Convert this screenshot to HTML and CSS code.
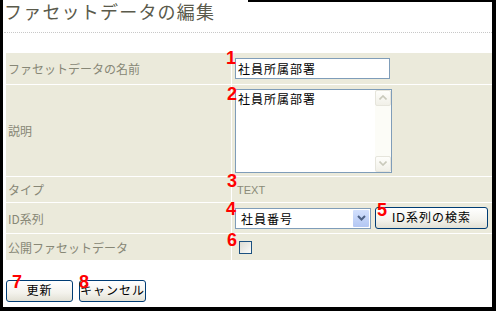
FILE: index.html
```html
<!DOCTYPE html>
<html lang="ja">
<head>
<meta charset="utf-8">
<title>ファセットデータの編集</title>
<link rel="stylesheet" href="styles.css">
</head>
<body>
<div class="frame">
  <h1 class="title">ファセットデータの編集</h1>
  <div class="form-grid">
    <div class="label">ファセットデータの名前</div>
    <div class="value"><input class="text-input" type="text" value="社員所属部署"></div>

    <div class="label">説明</div>
    <div class="value">
      <div class="textarea">
        <div class="textarea-text">社員所属部署</div>
        <div class="scrollbar">
          <span class="sb-btn"><svg width="8" height="5" viewBox="0 0 8 5"><path d="M0.5 4.5 L4 1 L7.5 4.5" fill="none" stroke="#c9c9bb" stroke-width="1.6"/></svg></span>
          <span class="sb-track"></span>
          <span class="sb-btn"><svg width="8" height="5" viewBox="0 0 8 5"><path d="M0.5 0.5 L4 4 L7.5 0.5" fill="none" stroke="#c9c9bb" stroke-width="1.6"/></svg></span>
        </div>
      </div>
    </div>

    <div class="label">タイプ</div>
    <div class="value"><span class="type-text">TEXT</span></div>

    <div class="label">ID系列</div>
    <div class="value">
      <div class="select">
        <span class="select-text">社員番号</span>
        <span class="select-btn"><svg width="9" height="6" viewBox="0 0 9 6"><path d="M1 1 L4.5 4.5 L8 1" fill="none" stroke="#4d6185" stroke-width="2"/></svg></span>
      </div>
      <button class="btn btn-search" type="button">ID系列の検索</button>
    </div>

    <div class="label">公開ファセットデータ</div>
    <div class="value"><span class="checkbox"></span></div>
  </div>
  <div class="actions">
    <button class="btn btn-action" type="button">更新</button>
    <button class="btn btn-action" type="button">キャンセル</button>
  </div>

  <span class="num n1">1</span>
  <span class="num n2">2</span>
  <span class="num n3">3</span>
  <span class="num n4">4</span>
  <span class="num n5">5</span>
  <span class="num n6">6</span>
  <span class="num n7">7</span>
  <span class="num n8">8</span>
</div>
</body>
</html>
```
FILE: styles.css
```css
html, body {
  margin: 0;
  padding: 0;
  background: #fff;
}

body {
  font-family: "Noto Sans CJK JP", sans-serif;
}

.frame {
  position: relative;
  width: 496px;
  height: 311px;
  box-sizing: border-box;
  border-left: 3px solid #000;
  border-right: 4px solid #000;
  border-bottom: 4px solid #000;
  padding-left: 3px;
  overflow: hidden;
}

.frame::before {
  content: "";
  position: absolute;
  top: 0;
  left: 245px;
  right: 0;
  height: 2px;
  background: #000;
}

.title {
  margin: 0 0 0 -2px;
  height: 32px;
  font-size: 18px;
  line-height: 22px;
  font-weight: normal;
  letter-spacing: 1.2px;
  color: #5a5a4b;
  border-bottom: 1px dotted #c8c8c8;
  box-sizing: content-box;
}

.form-grid {
  margin-top: 20px;
  display: grid;
  grid-template-columns: 225px 260px;
  grid-template-rows: 31px 91px 25px 30px 26px;
  gap: 1px;
  background: #fff;
}

.label {
  background: #ebeadb;
  color: #878776;
  font-size: 12px;
  display: flex;
  align-items: center;
  padding-left: 2px;
}

.value {
  background: #ebeadb;
  display: flex;
  align-items: center;
  padding-left: 3px;
  gap: 4px;
}

.text-input {
  width: 155px;
  height: 21px;
  box-sizing: border-box;
  border: 1px solid #7f9db9;
  padding: 0 2px;
  margin: 0;
  font-family: "Noto Sans CJK JP", sans-serif;
  font-size: 12px;
  letter-spacing: 1px;
  color: #000;
  background: #fff;
  outline: none;
}

.textarea {
  width: 157px;
  height: 84px;
  box-sizing: border-box;
  border: 1px solid #7f9db9;
  background: #fff;
  display: flex;
}

.textarea-text {
  flex: 1;
  font-size: 12px;
  letter-spacing: 1px;
  line-height: 15px;
  padding: 1px 2px;
  color: #000;
}

.scrollbar {
  width: 16px;
  display: flex;
  flex-direction: column;
  background: #fcfcf7;
}

.sb-btn {
  height: 16px;
  box-sizing: border-box;
  border: 1px solid #e6e5dc;
  border-radius: 2px;
  background: linear-gradient(#fefefb, #f1f0e8);
  display: flex;
  align-items: center;
  justify-content: center;
}

.sb-track {
  flex: 1;
}

.type-text {
  font-family: "Liberation Sans", sans-serif;
  font-size: 11px;
  color: #8a8a78;
  padding-left: 2px;
}

.select {
  width: 136px;
  height: 21px;
  box-sizing: border-box;
  border: 1px solid #7f9db9;
  background: #fff;
  display: flex;
  align-items: stretch;
}

.select-text {
  flex: 1;
  font-size: 12px;
  letter-spacing: 1px;
  line-height: 19px;
  padding-left: 5px;
  color: #000;
}

.select-btn {
  width: 16px;
  margin: 1px;
  border-radius: 1px;
  background: linear-gradient(#d3e0fd, #b3c7f3);
  display: flex;
  align-items: center;
  justify-content: center;
}

.btn {
  font-family: "Liberation Sans", "Noto Sans CJK JP", sans-serif;
  font-size: 12px;
  letter-spacing: 1px;
  color: #000;
  border: 1px solid #003c74;
  border-radius: 3px;
  background: linear-gradient(#ffffff, #f3f2ec 60%, #e2e0d4);
  padding: 0;
  margin: 0;
  line-height: 18px;
}

.btn-search {
  width: 113px;
  height: 22px;
}

.checkbox {
  width: 13px;
  height: 13px;
  box-sizing: border-box;
  border: 1px solid #1c5180;
  background: linear-gradient(135deg, #dcdcd4, #fbfbf9);
  margin-left: 4px;
  margin-top: 1px;
}

.actions {
  margin-top: 20px;
  display: flex;
  gap: 6px;
}

.btn-action {
  width: 67px;
  height: 22px;
}

.num {
  position: absolute;
  font-family: "Liberation Sans", sans-serif;
  font-weight: bold;
  font-size: 18px;
  line-height: 18px;
  color: #ff0000;
}

.n1 { left: 223px; top: 49px; }
.n2 { left: 224px; top: 85px; }
.n3 { left: 224px; top: 172px; }
.n4 { left: 223px; top: 200px; }
.n5 { left: 374px; top: 201px; }
.n6 { left: 224px; top: 231px; }
.n7 { left: 9px; top: 273px; }
.n8 { left: 76px; top: 273px; }
```
